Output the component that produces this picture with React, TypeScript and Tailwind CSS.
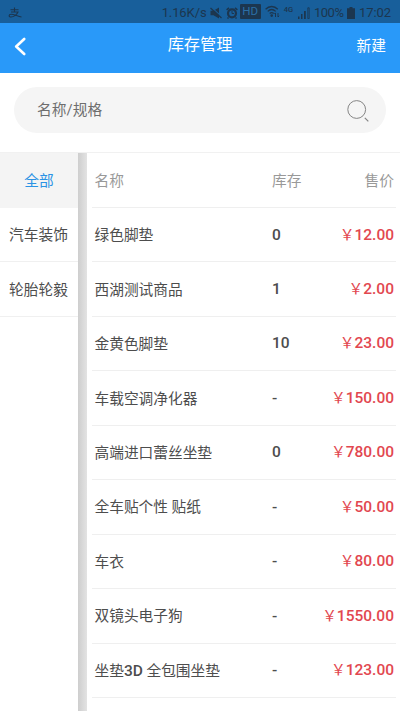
const categories = ["全部", "汽车装饰", "轮胎轮毅"];

const goods = [
  { name: "绿色脚垫", stock: "0", price: "12.00" },
  { name: "西湖测试商品", stock: "1", price: "2.00" },
  { name: "金黄色脚垫", stock: "10", price: "23.00" },
  { name: "车载空调净化器", stock: "-", price: "150.00" },
  { name: "高端进口蕾丝坐垫", stock: "0", price: "780.00" },
  { name: "全车贴个性 贴纸", stock: "-", price: "50.00" },
  { name: "车衣", stock: "-", price: "80.00" },
  { name: "双镜头电子狗", stock: "-", price: "1550.00" },
  { name: "坐垫3D 全包围坐垫", stock: "-", price: "123.00" },
];

function StatusBar() {
  return (
    <div className="flex h-[23px] shrink-0 items-center bg-[#185f9b] pl-2 pr-[9px] pt-[2px] text-[#1c364f]">
      <svg width="15" height="12" viewBox="0 0 15 12" fill="none" stroke="currentColor" strokeWidth="1.1">
        <path d="M2.500 2.800h8M6.500.5v4.500M3 5h7C8.800 8 5.500 10 3 10c-2.600 0-2.400-2.700 0-2.700 3 0 6.500 2 10.500 2.700" />
      </svg>
      <span className="ml-auto w-[44px] whitespace-nowrap text-[13px] tracking-[-0.1px]">1.16K/s</span>
      {/* mute */}
      <svg className="ml-[4px]" width="12" height="12" viewBox="0 0 12 12">
        <path d="M.5 3.800h3L9 .5v11L3.500 8.200h-3z" fill="currentColor" />
        <path d="M1.500 .3l10.500 9.700" stroke="#185f9b" strokeWidth="1.200" />
        <path d="M.5 1l11 10" stroke="currentColor" strokeWidth="1.200" />
      </svg>
      {/* alarm */}
      <svg className="ml-[4px]" width="12" height="12" viewBox="0 0 12 12" fill="none" stroke="currentColor">
        <circle cx="6" cy="6.300" r="4" strokeWidth="2.200" />
        <path d="M.6 2.800L3 .8M11.400 2.800L9 .8M2.500 10.500l-1 1M9.500 10.500l1 1" strokeWidth="1.500" />
        <path d="M6 4v2.500h2" strokeWidth="1" />
      </svg>
      <span className="mt-[-2px] ml-[2px] flex h-[15px] w-[21px] items-center justify-center rounded-[1px] bg-[#1c364f] pt-px text-[11.500px] leading-none text-[#2c6fa6]">
        HD
      </span>
      {/* wifi */}
      <svg className="ml-[4px] mt-[-2px]" width="15" height="13" viewBox="0 0 15 13" fill="none" stroke="currentColor" strokeWidth="1.300">
        <path d="M.6 4.200c3.500-3.600 8.700-3.600 12.200 0M2.700 6.400c2.400-2.300 5.600-2.300 8 0M4.700 8.500c1.300-1.200 2.700-1.200 4 0" />
        <circle cx="6.700" cy="10.600" r=".7" fill="currentColor" />
        <path d="M10.500 12V8M9.300 9l1.200-1.200M13 8v4M14.200 10.800L13 12" strokeWidth="1" />
      </svg>
      <span className="mb-[5px] ml-[4px] text-[7.500px] font-medium leading-none">4G</span>
      <svg className="ml-[5px]" width="12" height="12" viewBox="0 0 12 12" fill="currentColor">
        <path d="M0 9.500h1.500V12H0zM3 7h1.500v5H3zM6 4h1.800v8H6z" />
        <path d="M9.800.8h1.400v10.800H9.800z" fill="none" stroke="currentColor" strokeWidth=".8" />
      </svg>
      <span className="ml-[4px] w-[29px] whitespace-nowrap text-[13px] tracking-[-0.5px]">100%</span>
      <svg className="ml-[4px]" width="8" height="12" viewBox="0 0 8 12" fill="currentColor">
        <path d="M2.500 0h3v1.300H8V12H0V1.300h2.500z" />
      </svg>
      <span className="ml-[4px] w-[32px] whitespace-nowrap text-[13px] tracking-[-0.1px]">17:02</span>
    </div>
  );
}

function Header() {
  return (
    <header className="relative flex h-[50px] shrink-0 items-center justify-between bg-[#2999f9] px-[14px] text-white">
      <svg width="12" height="19" viewBox="0 0 12 19" fill="none" stroke="currentColor" strokeWidth="2.600" strokeLinecap="round" strokeLinejoin="round" className="mt-[-3px]">
        <path d="M10.200 2L2.200 9.500l8 7.500" />
      </svg>
      <h1 className="absolute inset-x-0 top-[9px] text-center text-[16.200px] leading-[26px]">库存管理</h1>
      <span className="mt-[-4px] text-[14.700px]">新建</span>
    </header>
  );
}

function SearchBar() {
  return (
    <div className="shrink-0 px-[14px] pb-[19px] pt-[14px]">
      <div className="flex h-[46px] items-center justify-between rounded-full bg-[#f5f5f5] pl-[23px] pr-[17px] text-[14.700px] text-[#6e6e6e]">
        <span className="tracking-[0.1px]">名称/规格</span>
        <svg className="mt-px" width="22" height="22" viewBox="0 0 22 22" fill="none" stroke="#858585" strokeWidth="1">
          <circle cx="9.700" cy="9.500" r="8.900" />
          <path d="M17.800 17.800l3.500 3.500" strokeWidth="1.200" />
        </svg>
      </div>
    </div>
  );
}

// Latin runs inside a name are set in medium weight.
function GoodsName({ name }: { name: string }) {
  return (
    <span className="w-[177px] whitespace-nowrap">
      {name.split(/([A-Za-z0-9]+)/).map((part, i) =>
        i % 2 ? (
          <span key={i} className="text-[15.500px] font-medium leading-none">
            {part}
          </span>
        ) : (
          part
        )
      )}
    </span>
  );
}

export default function App() {
  return (
    <div className="flex h-[711px] w-[400px] flex-col overflow-hidden bg-white font-[Roboto,'Noto_Sans_CJK_SC',sans-serif] text-[14.700px] text-[#4d4d4d]">
      <StatusBar />
      <Header />
      <SearchBar />

      <div className="flex min-h-0 flex-1 border-t border-[#f1f1f1]">
        <nav className="w-[78px] shrink-0">
          {categories.map((c, i) => (
            <div
              key={c}
              className={
                i === 0
                  ? "flex h-[55px] items-center justify-center bg-[#f4f4f4] pt-px text-[#2b93e4]"
                  : "flex h-[54.440px] items-center justify-center border-b border-[#f0f0f0] pt-px pr-px"
              }
            >
              {c}
            </div>
          ))}
        </nav>
        <div className="w-[9px] shrink-0 bg-linear-to-r from-[#cecece] to-[#e3e3e3]" />

        <main className="min-w-0 flex-1 pl-[5px] pr-1">
          <div className="flex h-[55px] items-center border-b border-[#efefef] pl-[2.500px] pr-[2px] pt-[2px] text-[#999]">
            <span className="w-[177.500px]">名称</span>
            <span>库存</span>
            <span className="ml-auto">售价</span>
          </div>
          {goods.map((g) => (
            <div key={g.name} className="flex h-[54.440px] items-center border-b border-[#efefef] pl-[2.500px] pr-[2px] pt-px">
              <GoodsName name={g.name} />
              <span className="ml-[0.500px] text-[15.500px] font-medium">{g.stock}</span>
              <span className="ml-auto text-[15.500px] font-medium text-[#e2474f]">
                <span className="text-[14.700px] font-normal leading-none">{"\uffe5"}</span>
                {g.price}
              </span>
            </div>
          ))}
        </main>
      </div>
    </div>
  );
}
